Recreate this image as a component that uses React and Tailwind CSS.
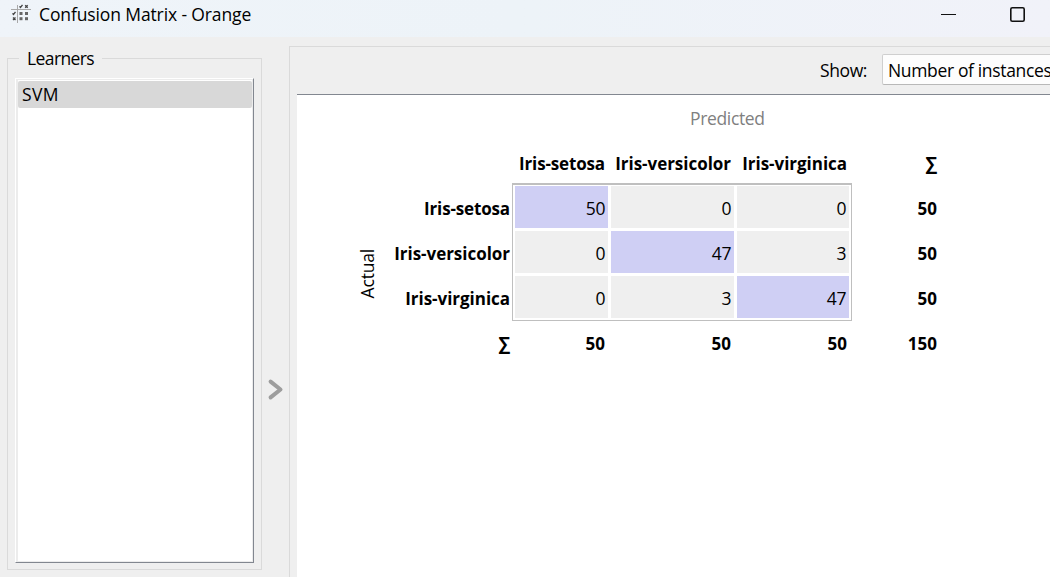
import React from "react";

const LABEL = "text-[17.5px] leading-[24px] whitespace-nowrap";
const BOLD = "text-[17px] leading-[24px] font-bold whitespace-nowrap";

const classes = [
  { name: "Iris-setosa", tracking: "tracking-[-0.15px]" },
  { name: "Iris-versicolor", tracking: "tracking-[-0.03px]" },
  { name: "Iris-virginica", tracking: "tracking-[-0.03px]" },
];

const matrix = [
  [50, 0, 0],
  [0, 47, 3],
  [0, 3, 47],
];

function MatrixIcon() {
  return (
    <svg width="20" height="20" viewBox="0 0 20 20" className="shrink-0">
      <path d="M6.5 1v18M0 5.5h20" stroke="#a8a8a8" strokeWidth="1" />
      <g fill="#666">
        <rect x="8.5" y="8" width="3" height="3" />
        <rect x="14" y="8" width="3" height="3" />
        <rect x="8.5" y="13.2" width="3" height="3" />
        <rect x="14" y="13.2" width="3" height="3" />
      </g>
      <path d="M8.5 2.3l1 1.2 2-2.7M14.2 1.3l2.5 2.5m0-2.5l-2.5 2.5M1.5 9.3l1 1.2 2-2.7M2 13.5l2.5 2.5m0-2.5L2 16" stroke="#444" strokeWidth="1.3" fill="none" />
    </svg>
  );
}

function TitleBar() {
  return (
    <header className="flex h-[37px] shrink-0 items-start bg-linear-to-r from-[#eff4f9] via-[#edf3f8] to-[#f1f2f9]">
      <div className="flex flex-1 pl-[11px] pt-[3px]">
        <div className="pt-[1px]">
          <MatrixIcon />
        </div>
        <span className={`${LABEL} -mt-px ml-[8px] tracking-[-0.12px]`}>Confusion Matrix - Orange</span>
      </div>
      <svg width="110" height="37" viewBox="0 0 110 37" fill="none" stroke="#111">
        <path d="M1 14.5h15" strokeWidth="1" />
        <rect x="70.8" y="7.8" width="13.4" height="13.4" rx="1.5" strokeWidth="1.6" />
      </svg>
    </header>
  );
}

function Learners() {
  return (
    <fieldset className="ml-[7px] mt-[21px] flex h-[512px] w-[255px] shrink-0 flex-col border border-[#dadada]">
      <div className="-mt-[13px] ml-[11px] flex h-[24px] w-[83px] shrink-0 bg-[#efefef] pl-[8px]">
        <span className={`${LABEL} tracking-[-0.6px]`}>Learners</span>
      </div>
      <div className="ml-[7px] mt-[8px] flex h-[485px] w-[239px] border border-b-[#828790] border-l-white border-r-[#828790] border-t-white bg-white">
        <div className="flex-1 border border-l-2 border-[#ececec]">
          <div className="mt-px h-[27px] rounded-[2px] bg-[#d8d8d8] pl-[4px] pt-px">
            <div className={`${LABEL} tracking-[0.4px]`}>SVM</div>
          </div>
        </div>
      </div>
    </fieldset>
  );
}

function Chevron() {
  return (
    <div className="w-[27px] shrink-0 pl-[5px] pt-[341px]">
      <svg width="18" height="24" viewBox="0 0 18 24" fill="none">
        <path d="M3.6 3.6L13.5 11.5L3.6 19.4" stroke="#9d9d9d" strokeWidth="4" strokeLinecap="round" strokeLinejoin="round" />
      </svg>
    </div>
  );
}

function Frame() {
  return (
    <div className="h-[138px] w-[340px] shrink-0 border border-t-2 border-[#bfbfbf] pl-[2px] pt-[1px]">
      <div className="grid grid-cols-[93px_123px_112px] auto-rows-[42px] gap-[3px]">
        {matrix.map((row, r) =>
          row.map((value, c) => (
            <div
              key={`${r}-${c}`}
              className={`${LABEL} pr-[3px] pt-[10px] text-right tracking-[-0.4px] ${r === c ? "bg-[#cfcff4]" : "bg-[#efefef]"}`}
            >
              {value}
            </div>
          ))
        )}
      </div>
    </div>
  );
}

function Sigma() {
  return <span className="-mt-px block text-[18px]">∑</span>;
}

function MatrixView() {
  return (
    <div className="flex flex-1 flex-col border-t border-[#828790] bg-white">
      <div className={`${LABEL} h-[57px] pl-[393px] pt-[11px] tracking-[-0.35px] text-[#808080]`}>Predicted</div>
      <div className={`${BOLD} flex h-[31px]`}>
        <div className="w-[308px] text-right tracking-[-0.15px]">{classes[0].name}</div>
        <div className="w-[126px] text-right tracking-[-0.03px]">{classes[1].name}</div>
        <div className="w-[116px] text-right tracking-[-0.03px]">{classes[2].name}</div>
        <div className="w-[90px] text-right"><Sigma /></div>
      </div>
      <div className="flex h-[138px]">
        <div className="flex w-[90px] items-start justify-end pt-[66px]">
          <span className={`${LABEL} mr-[8px] rotate-180 [writing-mode:vertical-rl] tracking-[-0.2px]`}>Actual</span>
        </div>
        <div className="flex w-[125px] flex-col gap-[21px] pr-[2px] pt-[14px]">
          {classes.map((c) => (
            <div key={c.name} className={`${BOLD} ${c.tracking} text-right`}>{c.name}</div>
          ))}
        </div>
        <Frame />
        <div className="flex w-[85px] flex-col gap-[21px] pt-[14px]">
          {classes.map((c) => (
            <div key={c.name} className={`${BOLD} text-right`}>50</div>
          ))}
        </div>
      </div>
      <div className={`${BOLD} flex pt-[11px]`}>
        <div className="w-[213px] text-right"><Sigma /></div>
        <div className="w-[95px] text-right">50</div>
        <div className="w-[126px] text-right">50</div>
        <div className="w-[116px] text-right">50</div>
        <div className="w-[90px] text-right">150</div>
      </div>
    </div>
  );
}

export default function App() {
  return (
    <div className="flex h-[577px] w-[1050px] flex-col overflow-hidden bg-[#efefef] font-['Open_Sans',sans-serif] text-black">
      <TitleBar />
      <div className="flex min-h-0 flex-1">
        <Learners />
        <Chevron />
        <main className="mt-[9px] flex min-w-0 flex-1 flex-col overflow-hidden border-l border-t border-[#dadada] pl-[7px]">
          <div className="flex h-[47px] shrink-0 pt-[7px]">
            <span className={`${LABEL} w-[585px] shrink-0 pl-[523px] pt-[4px] tracking-[-0.4px]`}>Show:</span>
            <div className="h-[31px] w-[220px] shrink-0 rounded-[2px] border border-[#cfcfcf] border-b-[#b8b8b8] bg-[#fdfdfd] pl-[5px] pt-[3px]">
              <span className={`${LABEL} tracking-[-0.35px]`}>Number of instances</span>
            </div>
          </div>
          <MatrixView />
        </main>
      </div>
    </div>
  );
}
